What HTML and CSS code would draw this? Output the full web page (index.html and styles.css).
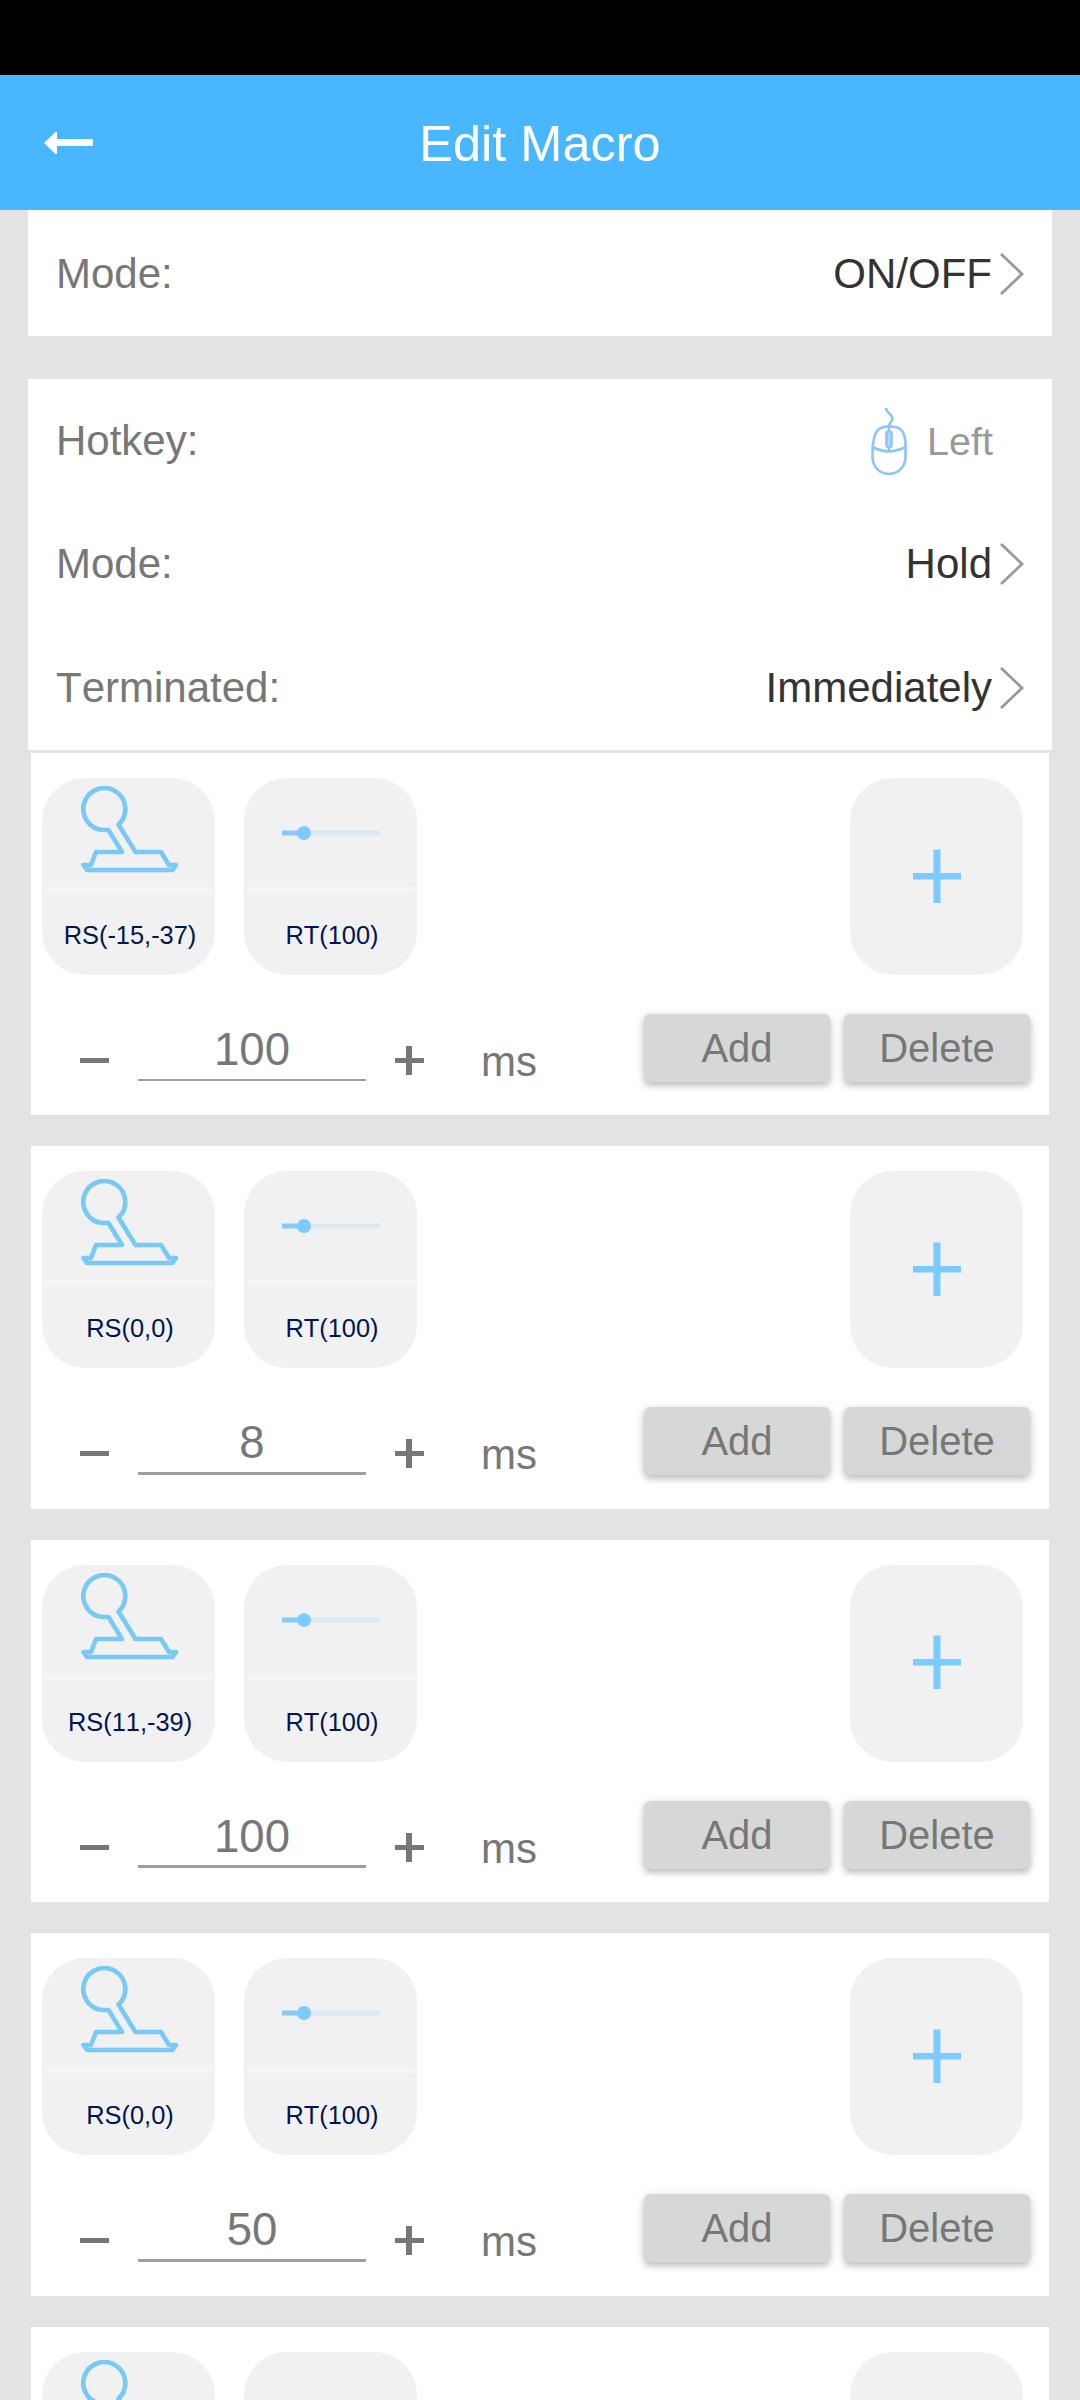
FILE: index.html
```html
<!DOCTYPE html>
<html lang="en">
<head>
<meta charset="utf-8">
<title>Edit Macro</title>
<link rel="stylesheet" href="styles.css">
</head>
<body>
<svg class="defs" width="0" height="0">
  <symbol id="chevron" viewBox="0 0 24 44"><path d="M1 2 L22 22 L1 42" fill="none" stroke="#999" stroke-width="2.8"/></symbol>
  <symbol id="stick" viewBox="0 0 98 87"><path d="M27.500 44 H22 A21 21 0 1 1 37.500 38.500 L54.500 66 H80 L88 79 H95 L91.500 84 H6 L2.500 79 H10 L15 66 H41 Z" fill="none" stroke="#78c9f5" stroke-width="4.600" stroke-linejoin="round"/></symbol>
  <symbol id="slider" viewBox="0 0 98 14"><path d="M22 7 H98" stroke="#dbe9f4" stroke-width="5"/><path d="M0 7 H22" stroke="#85cbfa" stroke-width="5"/><circle cx="22" cy="7" r="7" fill="#7bcbff"/></symbol>
  <symbol id="plus" viewBox="0 0 29 29"><path d="M0 12 H11 V0 H17 V12 H29 V17 H17 V29 H11 V17 H0 Z" fill="#777"/></symbol>
  <symbol id="addkey" viewBox="0 0 48 54"><path d="M0 24 H20.500 V0.500 H27.500 V24 H48 V30.500 H27.500 V54 H20.500 V30.500 H0 Z" fill="#7bcbff"/></symbol>
</svg>
<div class="status"></div>
<header class="header">
  <svg class="back" width="49" height="22" viewBox="0 0 49 22"><path d="M0 11 L11.500 0 H13 V7 H48 Q49 7 49 8 V13 Q49 14 48 14 H13 V22 H11.500 Z" fill="#fff"/></svg>
  <h1>Edit Macro</h1>
</header>
<main>
  <section class="panel first">
    <div class="row"><span class="label">Mode:</span><span class="value">ON/OFF</span><svg class="chev"><use href="#chevron"/></svg></div>
  </section>
  <section class="panel">
    <div class="row"><span class="label">Hotkey:</span>
      <svg class="mouse" width="36" height="68" viewBox="0 0 36 68" fill="none" stroke="#8cc5f8" stroke-width="2.600"><path d="M15 1 C15 6 22 7 21.500 12 C21 15 18 16 18 19"/><path d="M13 20 C6 21 3.500 27 2.500 34 C1.500 38 1.500 42 1.500 50 C1.500 60 9 67 18 67 C27 67 34.500 60 34.500 50 V38 C34.500 28 31 21 24 20 C20 19 16 19 13 20 Z"/><path d="M1.500 40 C12 45.500 24 45.500 34.500 40 M18 19 V24 M18 40 V44"/><rect x="15.500" y="24.500" width="5" height="15.500" rx="2" fill="#b5dafa"/></svg>
      <span class="hotkey">Left</span></div>
    <div class="row"><span class="label">Mode:</span><span class="value">Hold</span><svg class="chev"><use href="#chevron"/></svg></div>
    <div class="row"><span class="label">Terminated:</span><span class="value">Immediately</span><svg class="chev"><use href="#chevron"/></svg></div>
  </section>
  <div class="steps" id="steps"></div>
</main>
<template id="step">
  <article class="step">
    <div class="keys">
      <div class="key"><div class="pic"><svg class="stick"><use href="#stick"/></svg></div><div class="name rs"></div></div>
      <div class="key"><div class="pic"><svg class="slider"><use href="#slider"/></svg></div><div class="name">RT(100)</div></div>
      <div class="key add"><svg class="addkey"><use href="#addkey"/></svg></div>
    </div>
    <div class="controls">
      <span class="minus"></span><span class="delay"></span><svg class="plus"><use href="#plus"/></svg><span class="unit">ms</span>
      <button>Add</button><button>Delete</button>
    </div>
  </article>
</template>
<template id="step-peek">
  <article class="step peek">
    <div class="keys">
      <div class="key"><svg class="stick"><use href="#stick"/></svg></div>
      <div class="key"></div>
      <div class="key add"></div>
    </div>
  </article>
</template>
<script src="app.js"></script>
</body>
</html>
```
FILE: app.js
```javascript
const steps = [
  ["RS(-15,-37)", "100"],
  ["RS(0,0)", "8"],
  ["RS(11,-39)", "100"],
  ["RS(0,0)", "50"]
];
const list = document.getElementById("steps");
const template = document.getElementById("step");
for (const [stick, delay] of steps) {
  const node = template.content.cloneNode(true);
  node.querySelector(".rs").textContent = stick;
  node.querySelector(".delay").textContent = delay;
  list.append(node);
}
list.append(document.getElementById("step-peek").content.cloneNode(true));
```
FILE: styles.css
```css
* { box-sizing: border-box; }
html, body { height: 2400px; overflow: hidden; }
body { margin: 0; width: 1080px; background: #e3e3e3; font-family: "Liberation Sans", Arial, sans-serif; font-kerning: none; color: #777; }
svg { display: block; flex: none; }
.defs { position: absolute; }
.status { height: 75px; background: #000; }
.header { height: 135px; background: #49b7ff; display: grid; grid-template-columns: 44px 1fr 44px; align-items: center; }
.back { grid-column: 2; grid-row: 1; margin-top: 1px; }
.header h1 { grid-column: 2; grid-row: 1; margin: 2px 0 0; text-align: center; font-weight: 400; font-size: 50.500px; line-height: 60px; color: #fff; }
.panel { margin: 0 28px; padding: 0 28px; background: #fff; }
.panel.first { height: 126px; margin-bottom: 43px; }
.row { height: 123.500px; display: flex; align-items: center; font-size: 42px; line-height: 48px; }
.first .row { height: 127px; }
.first .label, .first .value { padding-top: 1px; }
.label { flex: 1; }
.value { color: #333; }
.chev { width: 24px; height: 44px; margin-left: 8px; }
.mouse { margin-right: 20px; }
.hotkey { font-size: 39.500px; color: #999; margin-right: 31px; }
.steps { margin: 3.500px 31px 0; display: flex; flex-direction: column; gap: 31px; }
.step { flex: none; height: 362.400px; background: #fff; padding: 25px 26px 0 11px; }
.keys { display: flex; gap: 29px; }
.key { width: 173px; height: 197px; border-radius: 43px; background: #f1f1f1; display: flex; flex-direction: column; }
.key.add { margin-left: auto; align-items: center; justify-content: center; }
.pic { height: 115px; border-bottom: 6px solid #f5f5f5; margin: 0 2px 0 3px; }
.name { color: #001652; font-size: 25.400px; line-height: 30px; text-align: center; margin: 27px 0 0 3px; }
.stick { width: 98px; height: 87px; margin: 8px 0 0 36px; }
.slider { width: 98px; height: 14px; margin: 48px 0 0 35px; }
.addkey { width: 48px; height: 54px; margin-bottom: 2px; }
.controls { display: flex; align-items: flex-start; margin: 36px -7px 0 38px; }
.minus { width: 29px; height: 5px; background: #777; margin-top: 47px; }
.delay { width: 228px; height: 70px; margin: 0 29px; border-bottom: 2px solid #9e9e9e; text-align: center; font-size: 45.500px; line-height: 77px; }
.step:nth-child(n+2) .delay { height: 70.500px; border-bottom-width: 3px; }
.plus { width: 29px; height: 29px; margin-top: 35px; }
.unit { font-size: 42px; line-height: 48px; margin: 27px 0 0 57px; flex: 1; }
button { width: 186px; height: 68px; margin: 3px 0 0 14px; padding: 0; border: 0; border-radius: 6px; background: #d6d8d7; color: #777; font: 40px/68px "Liberation Sans", Arial, sans-serif; box-shadow: 0 4px 6px rgba(0,0,0,.2), 0 1px 12px rgba(0,0,0,.1); }
.step.peek { height: 73.400px; }
.peek .key { height: 48.400px; border-radius: 43px 43px 0 0; overflow: hidden; }
.peek .stick { margin-left: 39px; }
```
